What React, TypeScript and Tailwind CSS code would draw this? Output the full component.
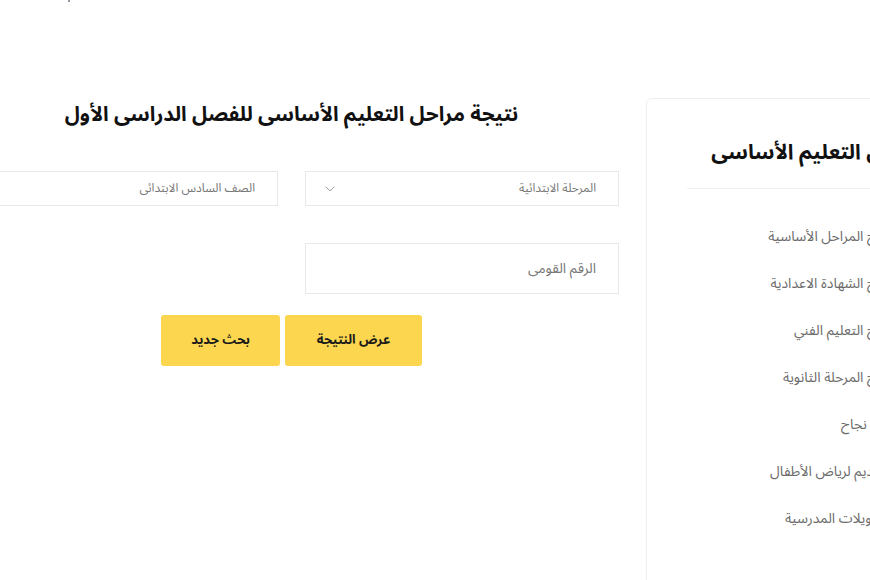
import { ChevronDown } from "lucide-react";

const sideLinks = [
  "نتائج المراحل الأساسية",
  "نتائج الشهادة الاعدادية",
  "نتائج التعليم الفني",
  "نتائج المرحلة الثانوية",
  "بيان نجاح",
  "التقديم لرياض الأطفال",
  "التحويلات المدرسية",
];

const font = "font-['Noto_Sans_Arabic','DejaVu_Sans',sans-serif]";

export default function App() {
  return (
    <div className={`relative h-[580px] w-[870px] overflow-hidden bg-white ${font}`}>
      {/* stray dot at the top */}
      <div className="absolute left-[68px] top-0 h-[2px] w-[2px] rounded-full bg-gray-500" />

      <div dir="rtl" className="-ml-[36px] flex w-[972px] gap-[27px] pt-[98px]">
        {/* Sidebar */}
        <aside className="h-[520px] w-[290px] shrink-0 rounded-md border border-[#eeeeee] pr-[42px] pl-10">
          <h2 className="-mr-[30px] mt-[38px] text-[21px] font-bold leading-[30px] text-[#111] whitespace-nowrap">
            مراحل التعليم الأساسى
          </h2>
          <div className="mt-[21px] border-t border-[#f0f0f0]" />
          <ul className="mt-[38px] flex flex-col gap-[27px]">
            {sideLinks.map((l) => (
              <li key={l} className="text-[14px] leading-[20px] text-[#6b6b6b] whitespace-nowrap">
                {l}
              </li>
            ))}
          </ul>
        </aside>

        {/* Main */}
        <main className="w-[655px] shrink-0 pt-[2px]">
          <h1 className="text-center text-[20.5px] font-bold leading-[30px] text-[#111]">
            نتيجة مراحل التعليم الأساسى للفصل الدراسى الأول
          </h1>

          <div className="mt-[41px] grid grid-cols-2 gap-x-[27px]">
            <div className="flex h-[35px] items-center justify-between border border-[#e8e8e8] pr-[22px] pl-[16px]">
              <span className="text-[12px] text-[#777]">المرحلة الابتدائية</span>
              <ChevronDown className="h-[16px] w-[16px] text-[#888]" strokeWidth={1.2} />
            </div>
            <div className="flex h-[35px] items-center border border-[#e8e8e8] pr-[22px]">
              <span className="text-[12px] text-[#777]">الصف السادس الابتدائى</span>
            </div>

            <div className="mt-[37px] flex h-[51px] items-center border border-[#e8e8e8] pr-[22px]">
              <span className="text-[14px] text-[#777]">الرقم القومى</span>
            </div>
          </div>

          <div className="mt-[21px] flex justify-center gap-[5px]">
            <button className="h-[51px] w-[137px] rounded-[3px] bg-[#fcd64f] text-[13px] font-bold text-[#1a1a1a]">
              عرض النتيجة
            </button>
            <button className="h-[51px] w-[119px] rounded-[3px] bg-[#fcd64f] text-[13px] font-bold text-[#1a1a1a]">
              بحث جديد
            </button>
          </div>
        </main>
      </div>
    </div>
  );
}
